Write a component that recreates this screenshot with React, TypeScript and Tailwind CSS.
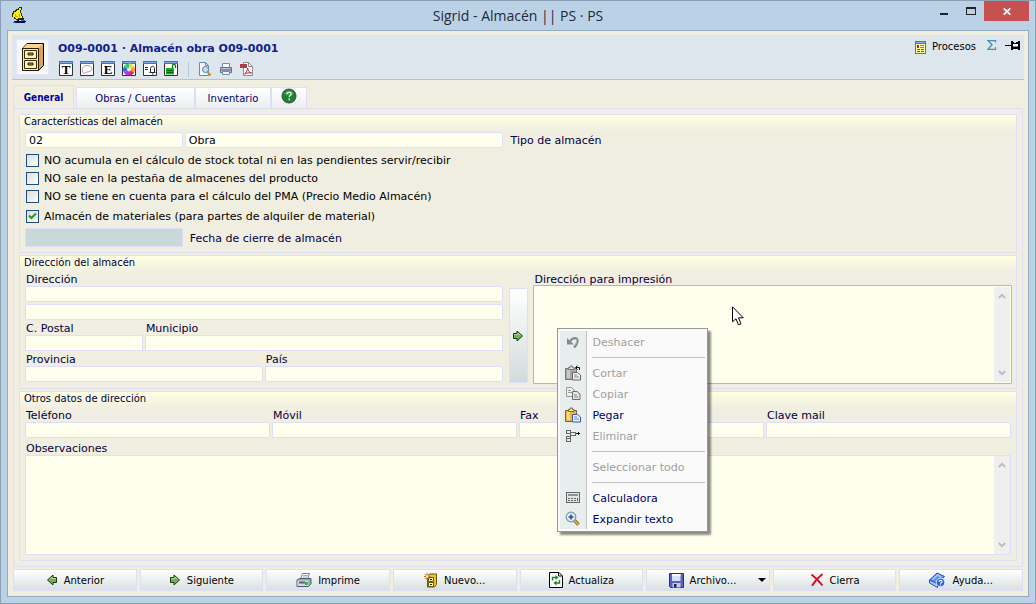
import { useState } from 'react'
import type { ReactNode } from 'react'

/* ---------- icons ---------- */

function BoatIcon() {
  return (
    <svg width="16" height="18" viewBox="0 0 16 18" shapeRendering="crispEdges">
      <path d="M7 1h3v3h-1v3h1v3h1v2h1v2H4v-1H2v-2H0V7h1V5h2V4h1V3h2V2h1z" fill="#2b2a08" />
      <path d="M7 2h2v2H8v3h1v3h1v2H6v1H4v-1H3v-1H1V8h1V6h2V5h1V4h2z" fill="#ffee10" />
      <path d="M3 8h1v2h2v1H3zM7 8h1v3H7z" fill="#c9aa00" />
      <path d="M5 14h2v1H5zM2 15h12v1h-1v1H3v-1H2z" fill="#07103a" />
      <path d="M1 16h2v1H1zM9 14h4v1H9z" fill="#3d6fd0" />
    </svg>
  )
}

function CabinetIcon() {
  return (
    <svg width="24" height="30" viewBox="0 0 24 30">
      <path d="M1.500 6.500 6 1.500h16.500v22L17.500 28.500h-16z" fill="#e0a860" stroke="#000" />
      <path d="M2 6 6 2h16l-4 4z" fill="#ffd48a" />
      <path d="M17.500 6.500 22 2.200v21l-4.500 4.800z" fill="#d9a45e" />
      <path d="M17.500 7v21" stroke="#5a3c10" />
      <path d="M1.500 6.500h16v22h-16z" fill="#f9e6b0" stroke="#2a1c00" />
      <path d="M3.500 8.500h12v8h-12zM3.500 18.500h12v8h-12z" fill="#fff3c0" stroke="#3a2a08" />
      <path d="M7 11h5v2H7zM7 21h5v2H7z" fill="#b8ac20" stroke="#222000" />
    </svg>
  )
}

// little framed page with a blue title strip
function FrameIcon({ children }: { children: ReactNode }) {
  return (
    <svg width="15" height="16" viewBox="0 0 15 16">
      <path d="M.5.500h13v14H.5z" fill="#fff" stroke="#333" />
      <path d="M0 0h14v3H0z" fill="#3f73c4" />
      <path d="M1 1h12v1H1z" fill="#7fa9ea" />
      {children}
    </svg>
  )
}

function ColorWheel() {
  return (
    <>
      <path d="M7 8.500v-6a6 6 0 0 1 5.200 3z" fill="#f4e14a" />
      <path d="M7 8.500l5.200-3a6 6 0 0 1 0 6z" fill="#ff9a3c" />
      <path d="M7 8.500l5.200 3A6 6 0 0 1 7 14.500z" fill="#e8265c" />
      <path d="M7 8.500v6a6 6 0 0 1-5.200-3z" fill="#b13be0" />
      <path d="M7 8.500l-5.200 3a6 6 0 0 1 0-6z" fill="#3d63f2" />
      <path d="M7 8.500 1.800 5.500A6 6 0 0 1 7 2.500z" fill="#33cf6a" />
      <circle cx="7" cy="8.500" r="2" fill="#fff" opacity=".8" />
    </>
  )
}

function PreviewIcon() {
  return (
    <svg width="14" height="16" viewBox="0 0 14 16">
      <path d="M1.500 1.500h6l3 3v10h-9z" fill="#f2f8ff" stroke="#5b8fc4" />
      <path d="M7.500 1.500v3h3" fill="none" stroke="#5b8fc4" />
      <circle cx="7.500" cy="8.500" r="3" fill="#bfe0f7" stroke="#607f9c" />
      <path d="m9.500 11 3 3.500" stroke="#c98a3a" strokeWidth="2" />
    </svg>
  )
}

function PrinterIcon() {
  return (
    <svg width="14" height="16" viewBox="0 0 14 16">
      <path d="M3.500 7V2.500h7V7" fill="#f6faff" stroke="#6d8fb8" />
      <path d="M1.500 6.500h11v5h-11z" fill="#b9c3cf" stroke="#66717f" />
      <path d="M2 9h10" stroke="#56606c" />
      <path d="M3.500 10.500h7v3h-7z" fill="#eaf4ff" stroke="#6d8fb8" />
    </svg>
  )
}

function PdfIcon() {
  return (
    <svg width="14" height="16" viewBox="0 0 14 16">
      <path d="M3.500 1.500h5l4 4v9h-9z" fill="#fff" stroke="#8d8d8d" />
      <path d="M8.500 1.500v4h4" fill="none" stroke="#8d8d8d" />
      <path d="M0 3h7v4H0z" fill="#b23a4a" />
      <path d="M4.500 13c2-1.500 3-4 3-6 .5 3 2 4.500 4 5-2-.5-5-.2-7 1z" fill="none" stroke="#c0202e" />
    </svg>
  )
}

function ProcessIcon() {
  return (
    <svg width="12" height="13" viewBox="0 0 12 13" shapeRendering="crispEdges">
      <path d="M0 0h11v13H0z" fill="#4a70d0" />
      <path d="M1 1h9v1H1z" fill="#8fb2f0" />
      <path d="M1 3h9v9H1z" fill="#fffb9a" />
      <path d="M2 4h2v3H2z" fill="#8a12d8" />
      <path d="M5 4h4v1H5zM5 6h4v1H5z" fill="#b08030" />
      <path d="M2 8h3v1H2zM6 8h3v1H6zM2 10h3v1H2zM6 10h3v1H6z" fill="#1b8a1b" />
    </svg>
  )
}

function SigmaIcon() {
  return (
    <svg width="10" height="10" viewBox="0 0 10 10">
      <path d="M8.500 2.500v-2H1L5 4.700 1 9.300h7.500v-2" fill="none" stroke="#3f93b8" strokeWidth="1.300" />
    </svg>
  )
}

function PinIcon() {
  return (
    <svg width="16" height="11" viewBox="0 0 16 11" shapeRendering="crispEdges">
      <path d="M0 5h6v1H0zM6 1h2v9H6zM13 1h2v9h-2zM8 3h5v1H8zM8 7h5v2H8zM11 2h2v1h-2zM8 2h1v1H8z" fill="#000" />
      <path d="M8 4h5v3H8z" fill="#fff" />
      <path d="M8 6h5v1H8z" fill="#888" />
    </svg>
  )
}

function HelpBall() {
  return (
    <svg width="16" height="16" viewBox="0 0 16 16">
      <circle cx="8" cy="8" r="7" fill="#1f8035" stroke="#3c4a3c" />
      <path d="M3 6a5.500 5.500 0 0 1 10 0 9 9 0 0 1-10 0z" fill="#58b667" opacity=".5" />
      <path d="M6 6.200c0-2.700 4.200-2.600 4.200-.2 0 1.500-2 1.500-2 3.200M8.200 10.600v1.600" fill="none" stroke="#d8f2c8" strokeWidth="1.500" />
    </svg>
  )
}

function GreenArrow({ back = false }: { back?: boolean }) {
  return (
    <svg width="12" height="12" viewBox="0 0 12 12" className={back ? '-scale-x-100' : ''}>
      <path d="M1.500 3.500H5V1l5.500 5L5 11V8.500H1.500z" fill="#6fb050" stroke="#1e3418" />
      <path d="M2 4.500h4V3l2.500 2.500" fill="none" stroke="#b4dc9c" />
    </svg>
  )
}

function PrintColorIcon() {
  return (
    <svg width="16" height="15" viewBox="0 0 16 15">
      <path d="M4.500 6 6.500.500h7L11.500 6z" fill="#fff" stroke="#6f86a8" />
      <path d="M7 2.500h5M6.500 4h5" stroke="#9db2cf" />
      <path d="M1 7 3.500 5.500H15v5.500l-2.500 2.500H1z" fill="#9aa3b1" stroke="#555e6d" />
      <path d="M1.500 7.500h11v5.500h-11z" fill="#d5dbe4" />
      <path d="M3 9.500h6" stroke="#59616f" strokeWidth="2" />
      <path d="M9 9h3v3H9z" fill="#10d030" />
    </svg>
  )
}

function NewCabinetIcon() {
  return (
    <svg width="14" height="15" viewBox="0 0 14 15">
      <path d="M3.500 3.500 5.500 1h7v10.500l-2 2.500h-7z" fill="#e3c53a" stroke="#6b5a00" />
      <path d="M4.500 4.500h5v4h-5zM4.500 9.500h5v4h-5z" fill="#fff5b0" stroke="#6b5a00" />
      <path d="M6 6.500h2M6 11.500h2" stroke="#222" />
      <path d="M3 0v7M0 3.500h6.500M.8 1l4.700 5M5.500 1 .8 6" stroke="#d06a1c" />
      <circle cx="3.200" cy="3.500" r="1.200" fill="#fff2c0" />
    </svg>
  )
}

function RefreshPageIcon() {
  return (
    <svg width="14" height="16" viewBox="0 0 14 16">
      <path d="M.5.500h9.500l3.500 3.500v11.500H.5z" fill="#fff" stroke="#000" />
      <path d="M9.500.500V4H13" fill="none" stroke="#000" />
      <path d="M3.500 8.500v-3H7M10.500 8v3H7" fill="none" stroke="#1a861a" strokeWidth="1.400" />
      <path d="M6.500 3v5l3-2.500zM7.500 8.500v5l-3-2.500z" fill="#1a861a" />
    </svg>
  )
}

function FloppyIcon() {
  return (
    <svg width="15" height="15" viewBox="0 0 15 15">
      <path d="M.5.500h14v14H1.500l-1-1z" fill="#5a60c4" stroke="#2b2f78" />
      <path d="M3 1h8.500v7H3z" fill="#d6e2fb" />
      <path d="M3 1h8.500v2H3z" fill="#f6f9ff" />
      <path d="M3.500 10h8v4.500h-8z" fill="#c9cbd6" />
      <path d="M5 11h2.500v3.500H5z" fill="#20235c" />
    </svg>
  )
}

function RedCross() {
  return (
    <svg width="14" height="14" viewBox="0 0 14 14">
      <path d="M1.500 1.500c4 3 7.500 6.500 11 11M12.500 1 C8 4.500 5 8 2 12.800" fill="none" stroke="#d01030" strokeWidth="2" />
    </svg>
  )
}

function BookHelpIcon() {
  return (
    <svg width="17" height="16" viewBox="0 0 17 16">
      <path d="M.5 8 8 1l7.500 3.500-7 7.500z" fill="#5c8ff0" stroke="#2c52b8" />
      <path d="M3.500 7.500 8.500 3l4 2" fill="none" stroke="#a8c8ff" strokeWidth="1.500" />
      <path d="M.5 8v3l8 4.500v-3.500z" fill="#a8c4fa" stroke="#2c52b8" />
      <circle cx="11.500" cy="10.500" r="4.300" fill="#2d5fe0" stroke="#dfeaff" />
      <path d="M10 9.800c0-2 3-2 3 0 0 1-1.500 1-1.500 2M11.500 12.500v1" fill="none" stroke="#fff" strokeWidth="1.200" />
    </svg>
  )
}

function UndoIcon() {
  return (
    <svg width="16" height="16" viewBox="0 0 16 16">
      <path d="M2 4v6.500h7z" fill="#858989" />
      <path d="M5 7.500C7 3.500 12.500 2.500 12.500 7c0 3-1.500 4.500-3.500 6.500" fill="none" stroke="#858989" strokeWidth="2.300" />
      <path d="M11 5c1 1 .8 4-1 6" fill="none" stroke="#bdbfbf" />
    </svg>
  )
}

function PasteIcon({ gray = false, cut = false }: { gray?: boolean; cut?: boolean }) {
  return (
    <svg width="16" height="16" viewBox="0 0 16 16">
      <path d="M.5 3.500h11v11H.5z" fill={gray ? '#a5a5a5' : '#e9b640'} stroke={gray ? '#777' : '#8a5f14'} />
      <path d="M2 5h3v8H2z" fill={gray ? '#c8c8c8' : '#f9d978'} />
      <path d="M3.500 2.500h1.500V1h2.500v1.500H9v2H3.500z" fill={gray ? '#ddd' : '#f4e7a6'} stroke={gray ? '#777' : '#7b6a34'} />
      <path d="M7.500 7.500h5l3 2.500v5h-8z" fill={gray ? '#efefef' : '#e4edfc'} stroke={gray ? '#666' : '#3b5da6'} />
      <path d="M9 10h3M9 12h5" stroke={gray ? '#888' : '#6a8ccc'} />
      {cut && <path d="M14.500 5V2.500H11M12.500.500l-2 2 2 2" fill="none" stroke="#111" />}
    </svg>
  )
}

function CopyIcon() {
  return (
    <svg width="16" height="14" viewBox="0 0 16 14">
      <path d="M1.500.500h5l2.500 2.500v6.500H1.500z" fill="#f1f1f1" stroke="#999" />
      <path d="M3 3.500h3M3 5.500h4" stroke="#999" />
      <path d="M7.500 4.500h4.500l3 2.500v5.500H7.500z" fill="#e6e6e6" stroke="#6c6c6c" />
      <path d="M9 8h3M9 10h4.500" stroke="#888" />
    </svg>
  )
}

function DeleteRowIcon() {
  return (
    <svg width="16" height="14" viewBox="0 0 16 14" shapeRendering="crispEdges">
      <path d="M1.500 1.500h4v3h-4zM1.500 7.500h4v2h-4zM1.500 9.500h4v3h-4zM5.500 3.500h5v3h-5z" fill="#eee" stroke="#666" />
      <path d="M11 4h4v1h-4zM13 3h1v3h-1z" fill="#111" />
    </svg>
  )
}

function CalcIcon() {
  return (
    <svg width="14" height="11" viewBox="0 0 14 11" shapeRendering="crispEdges">
      <path d="M.5.500h13v10H.5z" fill="#e4e4e4" stroke="#666" />
      <path d="M2 2h10v2H2z" fill="#8297a8" />
      <path d="M2 6h2v1H2zM5 6h2v1H5zM8 6h2v1H8zM2 8h2v1H2zM5 8h2v1H5zM8 8h2v1H8z" fill="#666" />
      <path d="M11 6h1v3h-1z" fill="#4a66a8" />
    </svg>
  )
}

function ZoomIcon() {
  return (
    <svg width="15" height="15" viewBox="0 0 15 15">
      <path d="m9.500 9.500 4 4" stroke="#8a5f14" strokeWidth="3.200" />
      <path d="m9.500 9.500 3.700 3.700" stroke="#efc14a" strokeWidth="1.600" />
      <circle cx="6" cy="6" r="4.800" fill="#dcedfb" stroke="#8093ab" strokeWidth="1.200" />
      <path d="M6 3.500v5M3.500 6h5" stroke="#2c4f8c" strokeWidth="1.600" />
    </svg>
  )
}

function Chevron({ down = false }: { down?: boolean }) {
  return (
    <svg width="8" height="6" viewBox="0 0 8 6" className={down ? 'rotate-180' : ''}>
      <path d="M.8 5 4 1.800 7.200 5" fill="none" stroke="#bdbdbd" strokeWidth="2" />
    </svg>
  )
}

/* ---------- form pieces ---------- */

const field = 'block w-full min-w-0 h-4 px-[3px] rounded-[1px] border border-[#dedef6] bg-[#ffffee] text-[11px] leading-[14px] text-[#00002a] outline-none'
const caption = 'block h-[15px] text-[11px] leading-[17px] text-[#00003c] whitespace-nowrap'

function Field({ id, label }: { id: string; label: string }) {
  return (
    <div>
      <label htmlFor={id} className={`pl-px ${caption}`}>{label}</label>
      <input id={id} type="text" className={field} />
    </div>
  )
}

function Memo({ id, focused = false }: { id: string; focused?: boolean }) {
  return (
    <div className={`flex rounded-[1px] border bg-[#ffffee] ${focused ? '-mx-px h-[99px] border-[#a3b9dc] p-px' : 'h-[100px] border-[#dedef6]'}`}>
      <textarea id={id} className="min-w-0 flex-1 resize-none px-[3px] text-[11px] outline-none" />
      <div className="flex w-4 flex-col items-center justify-between bg-[#efefef] py-1.5">
        <Chevron />
        <Chevron down />
      </div>
    </div>
  )
}

function Group({ title, children }: { title: string; children: ReactNode }) {
  return (
    <section className="rounded-[1px] border border-[#dedef6] bg-[linear-gradient(#ffffe0,#f0eee0_17px)] px-[5px] pb-1">
      <h2 className="-ml-px h-[15px] text-[10px] leading-[14px] text-[#00003c]">{title}</h2>
      {children}
    </section>
  )
}

function Check({ id, label, defaultChecked = false }: { id: string; label: string; defaultChecked?: boolean }) {
  return (
    <div className="flex h-[18px] items-center gap-[5px] pl-px">
      <span className="grid place-items-center">
        <input id={id} type="checkbox" defaultChecked={defaultChecked}
          className="peer col-start-1 row-start-1 size-[13px] appearance-none border border-[#1c4f80] bg-linear-to-br from-[#dcdcd7] to-white" />
        <svg width="9" height="9" viewBox="0 0 9 9" className="invisible col-start-1 row-start-1 peer-checked:visible pointer-events-none">
          <path d="M1 3.500 3.500 6 8 1.500" fill="none" stroke="#21a121" strokeWidth="2.200" />
        </svg>
      </span>
      <label htmlFor={id} className="pt-0.5 text-[11px] leading-4 text-black whitespace-nowrap">{label}</label>
    </div>
  )
}

/* ---------- context menu ---------- */

type MenuEntry = { label: string; icon?: ReactNode; disabled?: boolean } | null

const menu: MenuEntry[] = [
  { label: 'Deshacer', icon: <UndoIcon />, disabled: true },
  null,
  { label: 'Cortar', icon: <PasteIcon gray cut />, disabled: true },
  { label: 'Copiar', icon: <CopyIcon />, disabled: true },
  { label: 'Pegar', icon: <PasteIcon /> },
  { label: 'Eliminar', icon: <DeleteRowIcon />, disabled: true },
  null,
  { label: 'Seleccionar todo', disabled: true },
  null,
  { label: 'Calculadora', icon: <CalcIcon /> },
  { label: 'Expandir texto', icon: <ZoomIcon /> },
]

function ContextMenu() {
  return (
    <div role="menu" className="absolute left-[23px] top-[57px] z-10 w-[151px] border border-[#989898] bg-[#fafafa] p-0.5 shadow-[3px_3px_2px_rgba(0,0,0,0.45)]">
      <div className="bg-[linear-gradient(90deg,#e8eeee_26px,#c4c4c4_26px,#c4c4c4_27px,transparent_27px)]">
        {menu.map((entry, i) => entry ? (
          <button key={entry.label} role="menuitem" disabled={entry.disabled}
            className="flex h-[21px] w-full items-center text-left text-[11px] text-[#000066] disabled:text-[#a0a0a0]">
            <span className="flex w-[33px] justify-center pr-[7px]">{entry.icon}</span>
            <span className="pt-0.5 leading-4">{entry.label}</span>
          </button>
        ) : (
          <div key={i} className="flex h-2.5 items-center pl-8">
            <div className="h-px w-full bg-[#c0c0c0]" />
          </div>
        ))}
      </div>
    </div>
  )
}

/* ---------- header ---------- */

const tools: { name: string; icon: ReactNode }[] = [
  { name: 'Textos', icon: <FrameIcon><text x="7" y="13" textAnchor="middle" className="font-['Liberation_Serif'] text-[13px] font-bold">T</text></FrameIcon> },
  { name: 'Notas', icon: <FrameIcon><path d="M4 12.500C0 9 3 4.500 7 4.500c6 0 6.500 6 .5 6.500-1.500 0-2 .5-3.500 1.500z" fill="#fff" stroke="#c98aa8" /></FrameIcon> },
  { name: 'Estados', icon: <FrameIcon><text x="7" y="13" textAnchor="middle" className="font-['Liberation_Serif'] text-[13px] font-bold">E</text></FrameIcon> },
  { name: 'Color', icon: <FrameIcon><ColorWheel /></FrameIcon> },
  { name: 'Avisos', icon: <FrameIcon><path d="M2 6.500h3M2 8.500h3M6.500 11.500h6M7.500 11V7.500c0-3 4-3 4 0V11M9 13h1.500" fill="none" stroke="#222" /></FrameIcon> },
  { name: 'Bloqueo', icon: <FrameIcon><path d="M2 7h8v6.500H2z" fill="#12b812" /><path d="M3 9.500h6M3 11.500h6" stroke="#075c07" /><path d="M8.500 7V4.500c0-1.500 3-1.500 3 0V7" fill="none" stroke="#0a7a0a" strokeWidth="1.300" /></FrameIcon> },
]

const output: { name: string; icon: ReactNode }[] = [
  { name: 'Vista previa', icon: <PreviewIcon /> },
  { name: 'Imprimir', icon: <PrinterIcon /> },
  { name: 'PDF', icon: <PdfIcon /> },
]

const tabs = ['General', 'Obras / Cuentas', 'Inventario']

const actions: { label: string; icon: ReactNode; menu?: boolean }[] = [
  { label: 'Anterior', icon: <GreenArrow back /> },
  { label: 'Siguiente', icon: <GreenArrow /> },
  { label: 'Imprime', icon: <PrintColorIcon /> },
  { label: 'Nuevo...', icon: <NewCabinetIcon /> },
  { label: 'Actualiza', icon: <RefreshPageIcon /> },
  { label: 'Archivo...', icon: <FloppyIcon />, menu: true },
  { label: 'Cierra', icon: <RedCross /> },
  { label: 'Ayuda...', icon: <BookHelpIcon /> },
]

export default function App() {
  const [tab, setTab] = useState('General')

  return (
    <div className="min-h-screen border border-[#8ba0b4] bg-[#bbd2e6] px-1.5 pb-1.5 font-['DejaVu_Sans',sans-serif]">
      <header className="grid h-[29px] grid-cols-[1fr_auto_1fr] items-start">
        <div className="pl-[5px] pt-[5px]"><BoatIcon /></div>
        <h1 className="pt-[5px] font-['Open_Sans',sans-serif] text-[14px] leading-5 text-[#1e2a36]">Sigrid - Almacén || PS · PS</h1>
        <div className="flex justify-end">
          <button aria-label="Minimizar" className="flex h-5 w-[26px] items-center justify-center">
            <svg width="9" height="10" viewBox="0 0 9 10"><path d="M0 7h8v2H0z" fill="#222" /></svg>
          </button>
          <button aria-label="Maximizar" className="flex h-5 w-[27px] items-center justify-center">
            <svg width="10" height="8" viewBox="0 0 10 8" shapeRendering="crispEdges"><path d="M0 0h10v8H0zM1 2v5h8V2z" fill="#222" fillRule="evenodd" /></svg>
          </button>
          <button aria-label="Cerrar" className="flex h-5 w-[45px] items-center justify-center bg-[#c75050]">
            <svg width="8" height="7" viewBox="0 0 8 7"><path d="m.7.300 6.600 6.400M7.300.300.7 6.700" stroke="#fff" strokeWidth="1.700" /></svg>
          </button>
        </div>
      </header>

      <main className="border border-[#93abc0] bg-[#f0eee0] px-1 pt-1 pb-[5px]">
        <div className="flex h-[45px] items-center border-b border-[#b5bfe3] bg-[#dde6ec] pl-1">
          <div className="flex h-9 w-[33px] items-center justify-center border border-[#e6e6fa] bg-[#f6f9fb]"><CabinetIcon /></div>
          <div className="flex-1 self-start pl-[9px] pt-[7px]">
            <h2 className="text-[11px] font-bold leading-[14px] text-[#11218c]">O09-0001 · Almacén obra O09-0001</h2>
            <div className="flex items-center pl-px pt-[5px]">
              <div className="flex gap-1.5">
                {tools.map(t => <button key={t.name} aria-label={t.name} className="block">{t.icon}</button>)}
              </div>
              <div className="ml-[9px] mr-[9px] h-[15px] w-px bg-[#b8c4dc]" />
              <div className="flex gap-[7px]">
                {output.map(t => <button key={t.name} aria-label={t.name} className="block">{t.icon}</button>)}
              </div>
            </div>
          </div>
          <div className="flex items-start self-start pr-[3px] pt-[5px]">
            <button className="flex items-center gap-[5px] pr-[11px] text-[10px] leading-[14px] text-black"><ProcessIcon />Procesos</button>
            <button aria-label="Totales" className="pr-2"><SigmaIcon /></button>
            <button aria-label="Fijar"><PinIcon /></button>
          </div>
        </div>

        <div className="px-px pt-[5px]">
          <div role="tablist" className="flex items-end">
            {tabs.map(t => (
              <button key={t} role="tab" aria-selected={t === tab} onClick={() => setTab(t)}
                className={t === tab
                  ? "mr-0.5 h-[23px] w-[61px] border border-b-0 border-[#dedef6] font-['DejaVu_Sans_Condensed','DejaVu_Sans',sans-serif] text-[10px] font-bold text-[#0000a0]"
                  : `h-[21px] border border-b-0 border-[#dedef6] bg-linear-to-b from-white to-[#ecefef] pt-px text-[10px] text-[#000070] ${t === 'Obras / Cuentas' ? 'w-[119px]' : 'w-[76px]'}`}>
                {t}
              </button>
            ))}
            <button role="tab" aria-selected={false} aria-label="Ayuda"
              className="flex h-[21px] w-9 justify-center border border-b-0 border-[#dedef6] bg-linear-to-b from-white to-[#ecefef]">
              <HelpBall />
            </button>
          </div>

          <div role="tabpanel" className="flex flex-col gap-0.5 border border-[#dedef6] p-[5px]">
            <Group title="Características del almacén">
              <div className="mt-0.5 grid grid-cols-[158fr_318fr_507fr] gap-x-0.5">
                <input id="tipo" type="text" defaultValue="02" className={field} />
                <input aria-label="Nombre del tipo" type="text" defaultValue="Obra" className={field} />
                <label htmlFor="tipo" className={`pl-1.5 ${caption}`}>Tipo de almacén</label>
              </div>
              <div className="pt-[3px]">
                <Check id="stock" label="NO acumula en el cálculo de stock total ni en las pendientes servir/recibir" />
                <Check id="ficha" label="NO sale en la pestaña de almacenes del producto" />
                <Check id="pma" label="NO se tiene en cuenta para el cálculo del PMA (Precio Medio Almacén)" />
                <div className="pt-0.5">
                  <Check id="alquiler" label="Almacén de materiales (para partes de alquiler de material)" defaultChecked />
                </div>
              </div>
              <div className="mt-[3px] mb-px grid grid-cols-[158fr_827fr] items-center gap-x-0.5">
                <input id="cierre" type="text" disabled className="h-[19px] w-full min-w-0 rounded-[1px] border border-[#dedef6] bg-[#c9d9da]" />
                <label htmlFor="cierre" className={`pl-[5px] ${caption}`}>Fecha de cierre de almacén</label>
              </div>
            </Group>

            <Group title="Dirección del almacén">
              <div className="grid grid-cols-[1fr_19px_1fr] gap-x-1.5">
                <div>
                  <Field id="direccion" label="Dirección" />
                  <input aria-label="Dirección (línea 2)" type="text" className={`mt-0.5 ${field}`} />
                  <div className="grid grid-cols-[118fr_358fr] gap-x-0.5">
                    <Field id="postal" label="C. Postal" />
                    <Field id="municipio" label="Municipio" />
                  </div>
                  <div className="grid grid-cols-2 gap-x-0.5">
                    <Field id="provincia" label="Provincia" />
                    <Field id="pais" label="País" />
                  </div>
                </div>
                <button aria-label="Copiar dirección" className="mt-[17px] mb-px flex items-center justify-center rounded-[1px] border border-[#dedef6] bg-linear-to-b from-white to-[#d2dbdb]">
                  <GreenArrow />
                </button>
                <div className="relative">
                  <label htmlFor="impresion" className="block h-3.5 pl-px text-[11px] leading-[17px] text-[#00003c]">Dirección para impresión</label>
                  <Memo id="impresion" focused />
                  <svg width="13" height="20" viewBox="0 0 13 20" className="absolute left-[198px] top-[35px]">
                    <path d="M.5.800v15l3.500-3 2.500 6 2.500-1-2.500-6h4.800z" fill="#fff" stroke="#000" />
                  </svg>
                  <ContextMenu />
                </div>
              </div>
            </Group>

            <Group title="Otros datos de dirección">
              <div className="grid grid-cols-4 gap-x-0.5">
                <Field id="telefono" label="Teléfono" />
                <Field id="movil" label="Móvil" />
                <Field id="fax" label="Fax" />
                <Field id="clave" label="Clave mail" />
              </div>
              <label htmlFor="obs" className={`mt-0.5 pl-px ${caption}`}>Observaciones</label>
              <div className="mb-px"><Memo id="obs" /></div>
            </Group>
          </div>

          <footer className="grid grid-cols-8 gap-[3px] pt-0.5">
            {actions.map(a => (
              <button key={a.label}
                className="flex h-[22px] items-center rounded-[1px] border border-[#dedef6] bg-linear-to-b from-white to-[#d9e0e1] text-[10px] text-black">
                <span className="flex flex-1 items-center justify-center gap-1.5">{a.icon}{a.label}</span>
                {a.menu && <svg width="8" height="4" viewBox="0 0 8 4" className="mr-[3px]"><path d="M0 0h8L4 4z" fill="#000" /></svg>}
              </button>
            ))}
          </footer>
        </div>
      </main>
    </div>
  )
}
